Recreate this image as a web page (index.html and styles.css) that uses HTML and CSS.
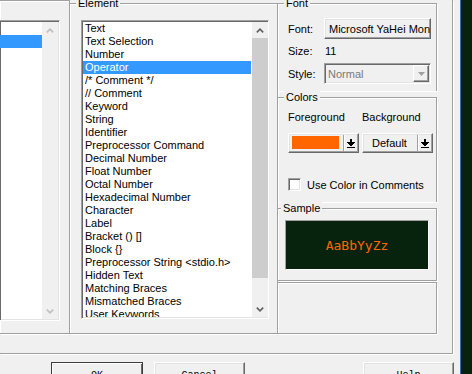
FILE: index.html
```html
<!DOCTYPE html>
<html>

<head>
  <link rel="stylesheet" href="styles.css">
</head>

<body>
  <div class="dialog">
    <div class="tab-page">
      <div class="pane-left">
        <div class="listbox listbox-left">
          <div class="list-items">
            <div class="item"></div>
            <div class="item selected"></div>
          </div>
          <div class="scrollbar disabled">
            <div class="sb-btn">
              <svg width="8" height="5" viewBox="0 0 8 5"><polyline points="0.8,4.4 4,1.2 7.2,4.4" /></svg>
            </div>
            <div class="sb-track"></div>
            <div class="sb-btn">
              <svg width="8" height="5" viewBox="0 0 8 5"><polyline points="0.8,0.6 4,3.8 7.2,0.6" /></svg>
            </div>
          </div>
        </div>
      </div>

      <fieldset class="group group-element">
        <legend>Element</legend>
        <div class="listbox listbox-element">
          <div class="list-items">
            <div class="item">Text</div>
            <div class="item">Text Selection</div>
            <div class="item">Number</div>
            <div class="item selected">Operator</div>
            <div class="item">/* Comment */</div>
            <div class="item">// Comment</div>
            <div class="item">Keyword</div>
            <div class="item">String</div>
            <div class="item">Identifier</div>
            <div class="item">Preprocessor Command</div>
            <div class="item">Decimal Number</div>
            <div class="item">Float Number</div>
            <div class="item">Octal Number</div>
            <div class="item">Hexadecimal Number</div>
            <div class="item">Character</div>
            <div class="item">Label</div>
            <div class="item">Bracket () []</div>
            <div class="item">Block {}</div>
            <div class="item">Preprocessor String &lt;stdio.h&gt;</div>
            <div class="item">Hidden Text</div>
            <div class="item">Matching Braces</div>
            <div class="item">Mismatched Braces</div>
            <div class="item">User Keywords</div>
          </div>
          <div class="scrollbar">
            <div class="sb-btn">
              <svg width="8" height="5" viewBox="0 0 8 5"><polyline points="0.8,4.4 4,1.2 7.2,4.4" /></svg>
            </div>
            <div class="sb-thumb"></div>
            <div class="sb-track"></div>
            <div class="sb-btn">
              <svg width="8" height="5" viewBox="0 0 8 5"><polyline points="0.8,0.6 4,3.8 7.2,0.6" /></svg>
            </div>
          </div>
        </div>
      </fieldset>

      <div class="pane-right">
        <fieldset class="group group-font">
          <legend>Font</legend>
          <div class="font-grid">
            <span>Font:</span>
            <button class="btn font-btn">Microsoft YaHei Mono</button>
            <span>Size:</span>
            <span class="size-value">11</span>
            <span>Style:</span>
            <div class="combo disabled">
              <span class="combo-text">Normal</span>
              <span class="combo-drop">
                <svg width="7" height="4" viewBox="0 0 7 4"><polygon points="0,0 7,0 3.5,4" /></svg>
              </span>
            </div>
          </div>
        </fieldset>

        <fieldset class="group group-colors">
          <legend>Colors</legend>
          <div class="colors-grid">
            <span>Foreground</span>
            <span>Background</span>
            <button class="btn color-btn">
              <span class="color-face"><span class="swatch"></span></span>
              <span class="color-drop">
                <svg width="8" height="9" viewBox="0 0 8 9">
                  <rect x="3" y="0" width="2" height="3" />
                  <rect x="0" y="3" width="8" height="1" />
                  <rect x="1" y="4" width="6" height="1" />
                  <rect x="2" y="5" width="4" height="1" />
                  <rect x="3" y="6" width="2" height="1" />
                  <rect x="0" y="8" width="8" height="1" />
                </svg>
              </span>
            </button>
            <button class="btn color-btn">
              <span class="color-face">Default</span>
              <span class="color-drop">
                <svg width="8" height="9" viewBox="0 0 8 9">
                  <rect x="3" y="0" width="2" height="3" />
                  <rect x="0" y="3" width="8" height="1" />
                  <rect x="1" y="4" width="6" height="1" />
                  <rect x="2" y="5" width="4" height="1" />
                  <rect x="3" y="6" width="2" height="1" />
                  <rect x="0" y="8" width="8" height="1" />
                </svg>
              </span>
            </button>
          </div>
          <label class="check-row">
            <span class="checkbox"></span>
            Use Color in Comments
          </label>
        </fieldset>

        <fieldset class="group group-sample">
          <legend>Sample</legend>
          <div class="sample">AaBbYyZz</div>
        </fieldset>

        <div class="blank-box"></div>
      </div>
    </div>

    <div class="dialog-buttons">
      <button class="btn push default">OK</button>
      <button class="btn push">Cancel</button>
      <button class="btn push help">Help</button>
    </div>
  </div>
</body>

</html>
```

FILE: styles.css
```css
:root {
  --face: #f0f0f0;
  --shadow: #a0a0a0;
  --dark-shadow: #696969;
  --light: #e3e3e3;
  --highlight: #ffffff;
  --select: #3399ff;
  --editor-bg: #07230e;
}

* {
  margin: 0;
  padding: 0;
  box-sizing: border-box;
}

body {
  width: 472px;
  height: 374px;
  overflow: hidden;
  background-color: var(--editor-bg);
  font-family: 'Liberation Sans', Arial, sans-serif;
  font-size: 11px;
  color: #000;
}

.dialog {
  width: 461px;
  height: 374px;
  background-color: var(--face);
  border-right: 1px solid #3b6ea5;
}

.tab-page {
  width: 453px;
  height: 354px;
  display: flex;
  align-items: flex-start;
  border-right: 1px solid var(--shadow);
  border-bottom: 1px solid var(--shadow);
  box-shadow: 1px 1px 0 var(--highlight);
}

/* etched group frames */
.group,
.pane-left,
.blank-box {
  border: 1px solid var(--shadow);
  box-shadow: inset 1px 1px 0 var(--highlight), 1px 1px 0 var(--highlight);
}

.group {
  min-width: 0;
}

.group legend {
  line-height: 13px;
  padding: 0 2px;
  margin-left: -4px;
  background-color: var(--face);
}

.pane-left {
  width: 70px;
  height: 334px;
  border-left: none;
  padding-top: 19px;
}

.group-element {
  width: 208px;
  height: 337px;
  margin-top: -3px;
  border-left: none;
  padding: 10px 0 0 11px;
}

.group-element legend {
  margin-left: -5px;
}

.pane-right {
  width: 160px;
  height: 334px;
  margin-left: -1px;
  display: flex;
  flex-direction: column;
}

/* list boxes */
.listbox {
  display: flex;
  background-color: #fff;
  border: 1px solid;
  border-color: var(--shadow) var(--highlight) var(--highlight) var(--shadow);
  box-shadow: inset 1px 1px 0 var(--dark-shadow), inset -1px -1px 0 var(--light);
  overflow: hidden;
}

.listbox-left {
  width: 60px;
  height: 301px;
  border-left: none;
  padding: 1px 1px 1px 0;
}

.listbox-left .list-items {
  width: 42px;
}

.listbox-element {
  width: 188px;
  height: 299px;
  padding: 1px 0 1px 1px;
}

.listbox-element .list-items {
  width: 169px;
  padding-right: 1px;
}

.list-items {
  overflow: hidden;
}

.item {
  height: 13px;
  line-height: 13px;
  padding-left: 2px;
  white-space: nowrap;
}

.item.selected {
  background-color: var(--select);
  color: #fff;
}

.scrollbar {
  width: 16px;
  display: flex;
  flex-direction: column;
  background-color: var(--face);
}

.sb-btn {
  height: 16px;
  flex: none;
  display: flex;
  align-items: center;
  justify-content: center;
}

.sb-btn polyline {
  fill: none;
  stroke: #606060;
  stroke-width: 1.6;
}

.scrollbar.disabled .sb-btn polyline {
  stroke: #bfbfbf;
}

.sb-thumb {
  height: 240px;
  flex: none;
  background-color: #cdcdcd;
}

.sb-track {
  flex: 1;
}

/* buttons */
.btn {
  font-family: inherit;
  font-size: 11px;
  color: #000;
  background-color: var(--face);
  border: 1px solid;
  border-color: var(--highlight) var(--dark-shadow) var(--dark-shadow) var(--highlight);
  box-shadow: inset -1px -1px 0 var(--shadow), inset 1px 1px 0 var(--light);
}

/* font group */
.group-font {
  margin-top: -3px;
  border-bottom: none;
  padding: 8px 5px 7px 10px;
}

.font-grid {
  display: grid;
  grid-template-columns: 36px 107px;
  grid-template-rows: 21px 24px 21px;
  align-items: center;
}

.font-btn {
  height: 21px;
  padding-left: 4px;
  text-align: left;
  white-space: nowrap;
  overflow: hidden;
}

.size-value {
  padding-left: 1px;
}

.combo {
  height: 21px;
  display: flex;
  align-items: center;
  padding: 1px;
  border: 1px solid;
  border-color: var(--shadow) var(--highlight) var(--highlight) var(--shadow);
  box-shadow: inset 1px 1px 0 var(--dark-shadow), inset -1px -1px 0 var(--light);
  background-color: var(--face);
}

.combo-text {
  flex: 1;
  padding-left: 2px;
}

.combo.disabled .combo-text {
  color: #7a7a7a;
}

.combo-drop {
  width: 16px;
  height: 17px;
  display: flex;
  align-items: center;
  justify-content: center;
  border: 1px solid;
  border-color: var(--highlight) var(--dark-shadow) var(--dark-shadow) var(--highlight);
  box-shadow: inset -1px -1px 0 var(--shadow);
}

.combo-drop polygon {
  fill: var(--shadow);
}

/* colors group */
.group-colors {
  border-bottom: none;
  padding: 7px 5px 11px 10px;
}

.group-colors legend,
.group-sample legend {
  margin-left: -4px;
}

.colors-grid {
  display: grid;
  grid-template-columns: 71px 71px;
  column-gap: 3px;
  row-gap: 9px;
  line-height: 13px;
}

.color-btn {
  height: 20px;
  display: flex;
  align-items: stretch;
  padding: 0;
}

.color-face {
  flex: 1;
  display: flex;
  align-items: center;
  justify-content: center;
  padding: 2px 4px 3px 3px;
}

.swatch {
  flex: 1;
  height: 13px;
  background-color: #ff6600;
}

.color-drop {
  width: 14px;
  display: flex;
  align-items: center;
  justify-content: center;
  border-left: 1px solid var(--shadow);
  box-shadow: inset 1px 0 0 var(--highlight);
  margin: 1px 1px 1px 0;
}

.color-drop rect {
  fill: #000;
}

.check-row {
  display: flex;
  align-items: center;
  gap: 6px;
  height: 13px;
  margin-top: 25px;
}

.checkbox {
  width: 13px;
  height: 13px;
  background-color: #fff;
  border: 1px solid;
  border-color: var(--shadow) var(--highlight) var(--highlight) var(--shadow);
  box-shadow: inset 1px 1px 0 var(--dark-shadow), inset -1px -1px 0 var(--light);
}

/* sample group */
.group-sample {
  padding: 5px 0 10px 7px;
}

.sample {
  width: 144px;
  height: 50px;
  display: flex;
  align-items: center;
  justify-content: center;
  background-color: var(--editor-bg);
  border: 1px solid;
  border-color: var(--shadow) var(--highlight) var(--highlight) var(--shadow);
  font-family: 'DejaVu Sans Mono', monospace;
  font-size: 13px;
  color: #ff6600;
}

.blank-box {
  flex: 1;
  margin-top: 1px;
}

/* dialog buttons */
.dialog-buttons {
  display: flex;
  gap: 11px;
  padding: 8px 6px 0 51px;
}

.push {
  width: 91px;
  height: 23px;
  padding-top: 4px;
  font-family: 'Liberation Mono', 'Courier New', monospace;
  font-size: 10px;
  line-height: 12px;
  text-align: center;
  vertical-align: top;
}

.push.default {
  width: 92px;
  border: 1px solid #3c3c3c;
  box-shadow: inset 1px 1px 0 var(--highlight), inset -1px -1px 0 var(--dark-shadow);
}

.push.help {
  margin-left: auto;
}
```
